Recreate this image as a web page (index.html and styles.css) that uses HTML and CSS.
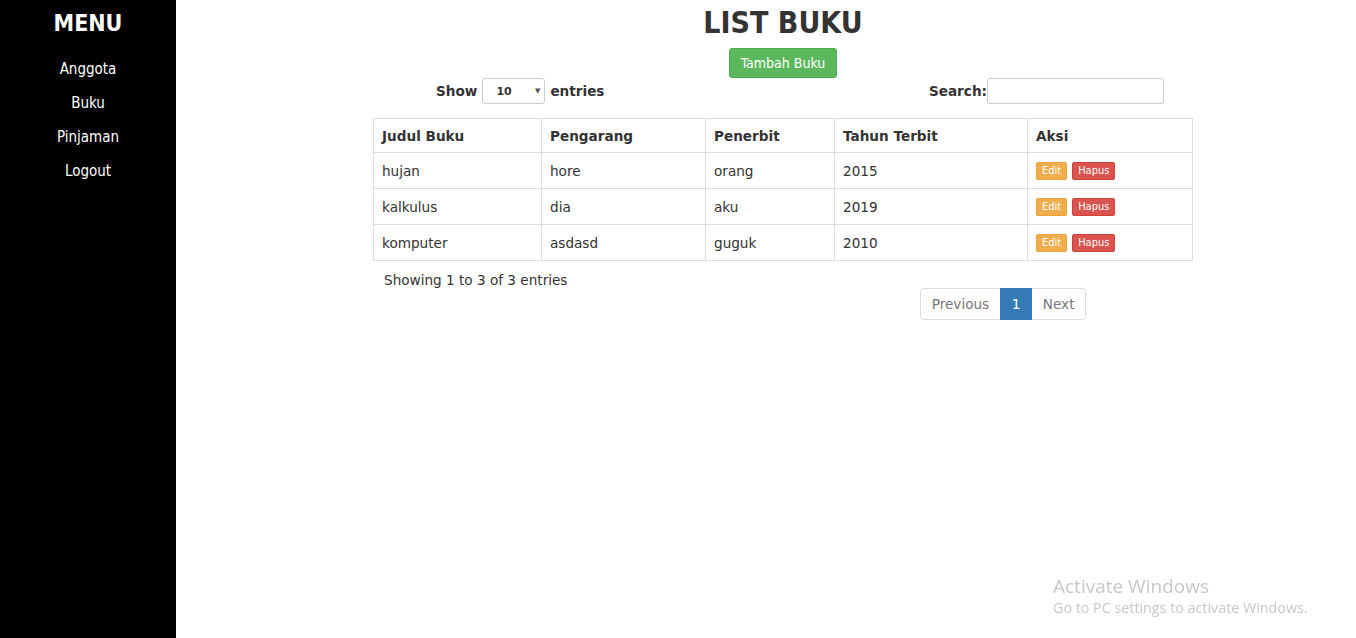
FILE: index.html
```html
<!DOCTYPE html>
<html>
<head>
<meta charset="utf-8">
<link rel="stylesheet" href="styles.css">
</head>
<body>
<div class="layout">
  <aside class="sidebar">
    <div class="menu-title">MENU</div>
    <nav class="menu">
      <a href="#">Anggota</a>
      <a href="#">Buku</a>
      <a href="#">Pinjaman</a>
      <a href="#">Logout</a>
    </nav>
  </aside>
  <main class="main">
    <div class="content">
      <h1 class="title">LIST BUKU</h1>
      <div class="add-row"><a class="btn btn-success" href="#">Tambah Buku</a></div>
      <div class="controls">
        <div class="length">Show <span class="select">10<span class="caret">▼</span></span> entries</div>
        <div class="search">Search:<span class="input"></span></div>
      </div>
      <table class="table">
        <thead>
          <tr><th class="c1">Judul Buku</th><th class="c2">Pengarang</th><th class="c3">Penerbit</th><th class="c4">Tahun Terbit</th><th class="c5">Aksi</th></tr>
        </thead>
        <tbody>
          <tr><td>hujan</td><td>hore</td><td>orang</td><td>2015</td><td><a class="btn-xs edit" href="#">Edit</a><a class="btn-xs hapus" href="#">Hapus</a></td></tr>
          <tr><td>kalkulus</td><td>dia</td><td>aku</td><td>2019</td><td><a class="btn-xs edit" href="#">Edit</a><a class="btn-xs hapus" href="#">Hapus</a></td></tr>
          <tr><td>komputer</td><td>asdasd</td><td>guguk</td><td>2010</td><td><a class="btn-xs edit" href="#">Edit</a><a class="btn-xs hapus" href="#">Hapus</a></td></tr>
        </tbody>
      </table>
      <div class="info">Showing 1 to 3 of 3 entries</div>
      <div class="pager-row">
        <ul class="pagination">
          <li class="page">Previous</li>
          <li class="page active">1</li>
          <li class="page">Next</li>
        </ul>
      </div>
    </div>
  </main>
</div>
<div class="watermark">
  <div class="wm1">Activate Windows</div>
  <div class="wm2">Go to PC settings to activate Windows.</div>
</div>
</body>
</html>
```
FILE: styles.css
```css
html, body {
  margin: 0;
  padding: 0;
  height: 100%;
}
body {
  font-family: "DejaVu Sans", Verdana, sans-serif;
  font-size: 13.6px;
  color: #333;
  background: #fff;
}
.layout {
  display: flex;
  height: 100%;
}
.sidebar {
  width: 176px;
  flex: none;
  background: #000;
  color: #fff;
  text-align: center;
  font-stretch: condensed;
}
.menu-title {
  font-weight: bold;
  font-size: 23px;
  line-height: 28px;
  margin-top: 9px;
}
.menu {
  display: flex;
  flex-direction: column;
  margin-top: 15px;
}
.menu a {
  color: #fff;
  text-decoration: none;
  font-size: 15px;
  line-height: 34px;
}
.main {
  flex: 1;
}
.content {
  width: 820px;
  margin-left: 197px;
}
.title {
  margin: 0;
  padding-top: 4px;
  font-size: 30px;
  line-height: 38px;
  text-align: center;
  font-weight: bold;
  font-stretch: condensed;
}
.add-row {
  display: flex;
  justify-content: center;
  margin-top: 6px;
}
.btn {
  display: inline-block;
  text-decoration: none;
  border-radius: 3px;
  font-size: 14px;
  font-stretch: condensed;
  line-height: 18px;
  padding: 5px 11px;
}
.btn-success {
  color: #fff;
  background: #5cb85c;
  border: 1px solid #4cae4c;
}
.controls {
  display: flex;
  justify-content: space-between;
  align-items: center;
  height: 26px;
  padding: 0 29px 0 63px;
}
.length, .search {
  font-weight: bold;
  display: flex;
  align-items: center;
}
.select {
  display: inline-flex;
  align-items: center;
  justify-content: space-between;
  box-sizing: border-box;
  width: 63px;
  height: 26px;
  margin: 0 5px;
  padding: 0 4px 0 13px;
  border: 1px solid #ccc;
  border-radius: 3px;
  font-size: 11px;
  font-weight: bold;
  color: #333;
}
.caret {
  font-size: 7px;
  color: #555;
}
.input {
  display: inline-block;
  box-sizing: border-box;
  width: 177px;
  height: 26px;
  border: 1px solid #ccc;
  border-radius: 3px;
}
.table {
  margin-top: 14px;
  width: 820px;
  border-collapse: collapse;
  border: 1px solid #ddd;
}
.table th, .table td {
  border: 1px solid #ddd;
  text-align: left;
  padding: 0 8px;
}
.table th {
  height: 33px;
  font-weight: bold;
}
.table td {
  height: 35px;
}
.c1 { width: 151px; }
.c2 { width: 147px; }
.c3 { width: 112px; }
.c4 { width: 176px; }
.btn-xs {
  display: inline-block;
  text-decoration: none;
  color: #fff;
  font-size: 11px;
  font-stretch: condensed;
  line-height: 16px;
  padding: 0 5px;
  border-radius: 2px;
  margin-right: 5px;
  vertical-align: middle;
}
.edit {
  background: #f0ad4e;
  border: 1px solid #eea236;
}
.hapus {
  background: #d9534f;
  border: 1px solid #d43f3a;
}
.info {
  padding: 10px 11px 0;
  line-height: 18px;
}
.pager-row {
  display: flex;
  justify-content: flex-end;
  padding-right: 107px;
  margin-top: -1px;
}
.pagination {
  display: flex;
  list-style: none;
  margin: 0;
  padding: 0;
}
.page {
  box-sizing: border-box;
  height: 32px;
  line-height: 30px;
  padding: 0 10.5px;
  border: 1px solid #ddd;
  color: #777;
  margin-left: -1px;
}
.page:first-child {
  border-radius: 4px 0 0 4px;
  margin-left: 0;
}
.page:last-child {
  border-radius: 0 4px 4px 0;
}
.page.active {
  background: #337ab7;
  border-color: #337ab7;
  color: #fff;
  padding: 0 11px;
  position: relative;
}
.watermark {
  position: fixed;
  left: 1053px;
  top: 574px;
  color: #c8c8c8;
  font-family: "Open Sans", "Noto Sans", sans-serif;
}
.wm1 {
  font-size: 19px;
  line-height: 24px;
}
.wm2 {
  font-size: 14.3px;
  line-height: 20px;
}
```
